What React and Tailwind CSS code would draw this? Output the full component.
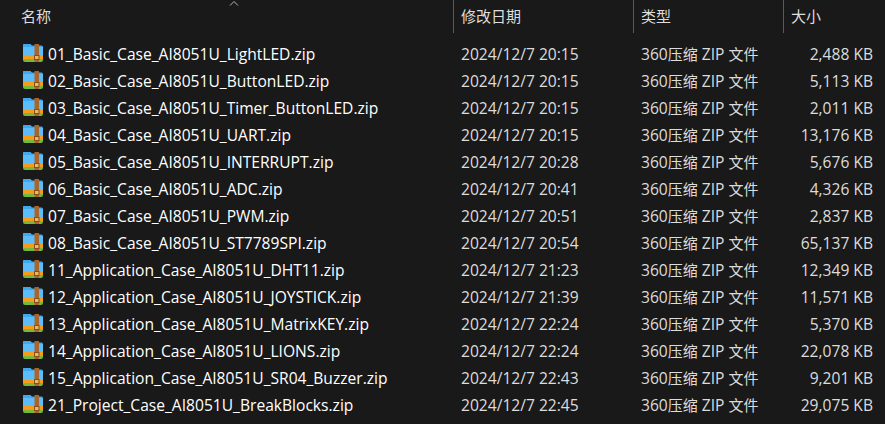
const rows = [
  ["01_Basic_Case_AI8051U_LightLED.zip", "2024/12/7 20:15", "2,488 KB"],
  ["02_Basic_Case_AI8051U_ButtonLED.zip", "2024/12/7 20:15", "5,113 KB"],
  ["03_Basic_Case_AI8051U_Timer_ButtonLED.zip", "2024/12/7 20:15", "2,011 KB"],
  ["04_Basic_Case_AI8051U_UART.zip", "2024/12/7 20:15", "13,176 KB"],
  ["05_Basic_Case_AI8051U_INTERRUPT.zip", "2024/12/7 20:28", "5,676 KB"],
  ["06_Basic_Case_AI8051U_ADC.zip", "2024/12/7 20:41", "4,326 KB"],
  ["07_Basic_Case_AI8051U_PWM.zip", "2024/12/7 20:51", "2,837 KB"],
  ["08_Basic_Case_AI8051U_ST7789SPI.zip", "2024/12/7 20:54", "65,137 KB"],
  ["11_Application_Case_AI8051U_DHT11.zip", "2024/12/7 21:23", "12,349 KB"],
  ["12_Application_Case_AI8051U_JOYSTICK.zip", "2024/12/7 21:39", "11,571 KB"],
  ["13_Application_Case_AI8051U_MatrixKEY.zip", "2024/12/7 22:24", "5,370 KB"],
  ["14_Application_Case_AI8051U_LIONS.zip", "2024/12/7 22:24", "22,078 KB"],
  ["15_Application_Case_AI8051U_SR04_Buzzer.zip", "2024/12/7 22:43", "9,201 KB"],
  ["21_Project_Case_AI8051U_BreakBlocks.zip", "2024/12/7 22:45", "29,075 KB"],
];

function ZipIcon() {
  return (
    <svg width="20" height="20" viewBox="0 1 20 20" className="shrink-0">
      <path d="M0 2 Q0 0.5 1.5 0.5 H7 L9 2.5 H18.5 Q20 2.5 20 4 V12 H0 Z" fill="#3fa9f0" />
      <rect x="0" y="4" width="20" height="8" fill="#5cbdfa" />
      <rect x="0" y="12" width="20" height="4" fill="#f59c1a" />
      <path d="M0 16 H20 V17 Q20 19 18 19 H2 Q0 19 0 17 Z" fill="#74b83c" />
      <rect x="11.5" y="0.5" width="4.5" height="18.5" fill="#a9662c" />
      <rect x="11.5" y="12.5" width="4.5" height="4" fill="#e8b860" stroke="#8a4d1c" strokeWidth="1" />
    </svg>
  );
}

export default function App() {
  return (
    <div className="w-[885px] h-[424px] overflow-hidden bg-[#191919] text-[15.6px] font-['Open_Sans','Noto_Sans_CJK_SC',sans-serif]">
      <div className="grid grid-cols-[453px_180px_150px_102px] h-[32px] text-[15px] text-[#dedede]">
        <div className="relative pl-[21px] leading-[33px]">
          名称
          <svg width="10" height="6" viewBox="0 0 10 6" className="absolute left-[229px] top-[0px]">
            <path d="M1 5.5 L5 1.5 L9 5.5" fill="none" stroke="#b5b5b5" strokeWidth="1" />
          </svg>
        </div>
        <div className="border-l border-[#5a5a5a] pl-[7px] leading-[33px]">修改日期</div>
        <div className="border-l border-[#5a5a5a] pl-[7px] leading-[33px]">类型</div>
        <div className="border-l border-[#5a5a5a] pl-[7px] leading-[33px]">大小</div>
      </div>
      <div className="pt-[9px]">
        {rows.map((r) => (
          <div key={r[0]} className="grid grid-cols-[453px_180px_150px_102px] h-[27px] items-center">
            <div className="flex items-center gap-[5px] pl-[23px] text-white whitespace-nowrap">
              <ZipIcon />
              <span>{r[0]}</span>
            </div>
            <div className="pl-[8px] text-[#dcdcdc]">{r[1]}</div>
            <div className="pl-[8px] text-[#dcdcdc] whitespace-nowrap">
              360<span className="text-[15px]">压缩</span> ZIP <span className="text-[15px]">文件</span>
            </div>
            <div className="pr-[12px] text-right text-[#dcdcdc]">{r[2]}</div>
          </div>
        ))}
      </div>
    </div>
  );
}
